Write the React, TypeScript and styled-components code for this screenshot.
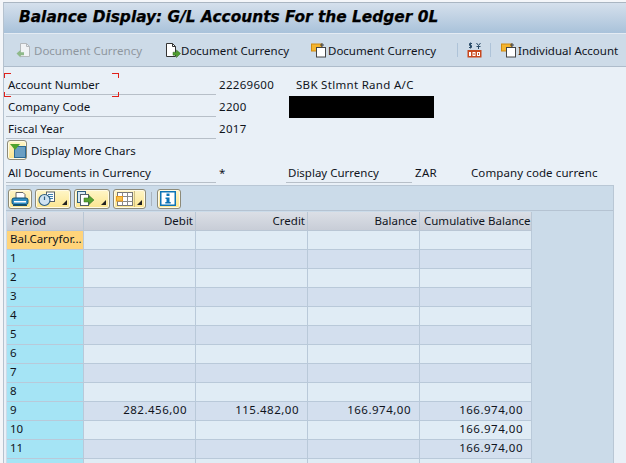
import React from 'react';
import styled, { createGlobalStyle } from 'styled-components';

const GlobalStyle = createGlobalStyle`
  html, body { margin: 0; padding: 0; background: #f4f6f9; }
  body { font-family: "Noto Sans", "Open Sans", "Liberation Sans", sans-serif; font-size: 11.5px; color: #10141c; }
`;

const Page = styled.div`
  width: 623px;
  height: 461px;
  margin: 2px 0 0 3px;
  overflow: hidden;
  background: #e9f0f7;
  border-top: 1px solid #aab6c2;
  border-left: 1px solid #b5c2cf;
`;

const TitleBar = styled.div`
  height: 27px;
  padding: 0 0 3px 15px;
  display: flex;
  align-items: center;
  background: linear-gradient(#d5e0ec, #a9c2da);
  border-bottom: 1px solid #e4ebf3;
`;

const Title = styled.h1`
  margin: 0;
  font-family: "DejaVu Sans", Verdana, sans-serif;
  font-size: 15.4px;
  font-weight: 700;
  font-style: italic;
  color: #000;
  -webkit-text-stroke: 0.25px #000;
`;

const Toolbar = styled.div`
  height: 32px;
  display: flex;
  align-items: center;
  background: #cddbe8;
  border-bottom: 1px solid #aebccb;
`;

const ToolButton = styled.div<{ $disabled?: boolean; $width: number; $gap?: number; $pad?: number }>`
  width: ${p => p.$width}px;
  flex: none;
  display: flex;
  align-items: center;
  gap: ${p => p.$gap ?? 1}px;
  white-space: nowrap;
  color: ${p => (p.$disabled ? '#8f979f' : '#10141c')};
  padding-left: ${p => p.$pad ?? 12}px;
  box-sizing: border-box;
`;

const ToolSeparator = styled.div`
  width: 1px;
  height: 14px;
  flex: none;
  background: #aec3d8;
`;

const Form = styled.div`
  position: relative;
  padding: 6px 0 0 2px;
`;

const FormRow = styled.div`
  display: flex;
  align-items: flex-start;
  height: 22px;
`;

const Label = styled.div<{ $width?: number }>`
  width: ${p => p.$width ?? 210}px;
  flex: none;
  box-sizing: border-box;
  height: 22px;
  line-height: 16px;
  padding: 4px 0 0 2px;
  border-bottom: 1px solid #b7bfc8;
  white-space: nowrap;
`;

const Value = styled.div<{ $width?: number; $spacing?: number }>`
  width: ${p => p.$width ?? 77}px;
  flex: none;
  padding: 4px 0 0 3px;
  line-height: 16px;
  letter-spacing: ${p => p.$spacing ?? 0.3}px;
  box-sizing: border-box;
  white-space: nowrap;
`;

const Redacted = styled.div`
  width: 145px;
  height: 22px;
  margin-top: 1px;
  background: #000;
`;

const FocusCorner = styled.span<{ $bottom?: boolean; $right?: boolean }>`
  position: absolute;
  width: 6px;
  height: 4px;
  ${p => (p.$right ? 'left: 108px;' : 'left: 0;')}
  ${p => (p.$bottom ? 'top: 25px;' : 'top: 6px;')}
  border: 0 solid #e0201a;
  ${p => (p.$bottom ? 'border-bottom-width: 1px;' : 'border-top-width: 1px;')}
  ${p => (p.$right ? 'border-right-width: 1px;' : 'border-left-width: 1px;')}
`;

const MoreRow = styled.div`
  display: flex;
  align-items: center;
  gap: 4px;
  height: 22px;
  padding-left: 1px;
`;

const IconButton = styled.div<{ $width?: number }>`
  width: ${p => p.$width ?? 24}px;
  height: 20px;
  flex: none;
  box-sizing: border-box;
  position: relative;
  display: flex;
  align-items: center;
  padding-left: 2px;
  border: 1px solid #8d8a78;
  border-radius: 3px;
  background: linear-gradient(#fff6c8, #fbe58f);
  box-shadow: inset 0 0 0 1px #fffbe6;
`;

const MenuCorner = styled.span`
  position: absolute;
  right: 3px;
  bottom: 3px;
  width: 0;
  height: 0;
  border-left: 5px solid transparent;
  border-bottom: 5px solid #222;
`;

const ButtonDivider = styled.span`
  position: absolute;
  right: 10px;
  top: 1px;
  bottom: 1px;
  width: 1px;
  background: #cdbf86;
`;

const GridPanel = styled.div`
  margin-top: 2px;
  width: 608px;
  height: 300px;
  box-sizing: border-box;
  background: #cbdbe9;
  border: 1px solid #b9c7d5;
  border-left: none;
`;

const GridToolbar = styled.div`
  height: 25px;
  box-sizing: border-box;
  padding: 1px 0 0 2px;
  display: flex;
  align-items: center;
  gap: 3px;
  border-bottom: 1px solid #b5c3d2;
`;

const GridDivider = styled.div`
  width: 1px;
  height: 14px;
  margin: 0 2px;
  background: #aab4bf;
`;

const Table = styled.div`
  margin: 1px 0 0 1px;
  width: 525px;
`;

const GridRow = styled.div`
  display: grid;
  grid-template-columns: 77px 112px 112px 112px 112px;
  height: 19px;
`;

const HeaderCell = styled.div<{ $right?: boolean }>`
  box-sizing: border-box;
  height: 19px;
  line-height: 18px;
  padding: 0 ${p => (p.$right ? '2px' : '3px')} 0 ${p => (p.$right ? '3px' : '4px')};
  text-align: ${p => (p.$right ? 'right' : 'left')};
  background: linear-gradient(#dbdfe6, #c8cdd7);
  border-right: 1px solid #b9c6d4;
  border-bottom: 1px solid #b9c6d4;
  white-space: nowrap;
`;

const PeriodCell = styled.div<{ $total?: boolean }>`
  box-sizing: border-box;
  line-height: 16px;
  padding-left: 3px;
  background: ${p => (p.$total ? '#ffd47a' : '#a5e4f5')};
  border-right: 1px solid #b9c9d9;
  border-bottom: 1px solid #b9c9d9;
  white-space: nowrap;
  overflow: hidden;
`;

const AmountCell = styled.div<{ $odd: boolean }>`
  box-sizing: border-box;
  line-height: 16px;
  padding-right: 8px;
  letter-spacing: 0.5px;
  text-align: right;
  background: ${p => (p.$odd ? '#e0ecf5' : '#d3dfee')};
  border-right: 1px solid #b9c9d9;
  border-bottom: 1px solid #b9c9d9;
`;

const Svg = styled.svg`
  flex: none;
  display: block;
`;

const FadedDocIcon = () => (
  <Svg width="16" height="16" viewBox="0 0 16 16">
    <path d="M4.500 1.500h6l3 3v10h-9z" fill="#f1f3f5" stroke="#b4b8bc" />
    <path d="M10.500 1.500v3h3" fill="none" stroke="#b4b8bc" />
    <path d="M0.500 11.500l4-3.500v2.200H8v3H4.500V15.500z" fill="#8fb98a" />
  </Svg>
);

const DocIcon = () => (
  <Svg width="16" height="16" viewBox="0 0 16 16">
    <path d="M1.500 1.500h6l3 3v10h-9z" fill="#fff" stroke="#333" />
    <path d="M7.500 1.500v3h3" fill="none" stroke="#333" />
    <path d="M15.500 11.500l-4-3.500v2.200H8v3h3.500V15.500z" fill="#4f9d2f" stroke="#2c6b1a" strokeWidth=".5" />
  </Svg>
);

const CopyIcon = () => (
  <Svg width="16" height="16" viewBox="0 0 16 16">
    <rect x="0.500" y="2" width="10" height="7" fill="#f5b52e" stroke="#d08a10" />
    <rect x="5.500" y="5.500" width="9" height="9.500" fill="#fff" stroke="#444" />
    <path d="M11 1v4M9 3h4" stroke="#444" strokeWidth="1" />
  </Svg>
);

const CurrencyIcon = () => (
  <Svg width="15" height="16" viewBox="0 0 15 16">
    <rect x="0.500" y="8" width="14" height="7.500" fill="#c8481e" />
    <rect x="2" y="10" width="2" height="4" fill="#fff" />
    <rect x="5.500" y="10" width="3" height="4" fill="#fff" />
    <rect x="6.500" y="11" width="1" height="2" fill="#c8481e" />
    <rect x="10" y="10" width="3" height="4" fill="#fff" />
    <rect x="11" y="11" width="1" height="2" fill="#c8481e" />
    <path d="M5 1.500H2.500v2h2v2H2M3.500 .5v6M9.500 1l2 2.500 2-2.500M11.500 3.500v3.500M9.500 4.500h4" fill="none" stroke="#2a4a66" />
  </Svg>
);

const FilterIcon = () => (
  <Svg width="16" height="15" viewBox="0 0 16 15">
    <rect x="4.500" y="3.500" width="11" height="11" fill="#6a9fc4" stroke="#2b6a96" />
    <path d="M0 1h10L5 7z" fill="#4fa32d" />
  </Svg>
);

const PrintIcon = () => (
  <Svg width="18" height="16" viewBox="0 0 18 16">
    <path d="M5 1.500h7l2 2v4H5z" fill="#fff" stroke="#666" />
    <rect x="1" y="7" width="16" height="6.500" rx="2" fill="#2f8fc4" stroke="#14506f" />
    <rect x="3" y="10" width="12" height="1.500" fill="#fff" />
    <rect x="2" y="14" width="14" height="1" fill="#14506f" />
  </Svg>
);

const ViewIcon = () => (
  <Svg width="18" height="16" viewBox="0 0 18 16">
    <rect x="8.500" y="1" width="8" height="9.500" fill="#fff" stroke="#55606a" />
    <path d="M10 3.500h5M10 5.500h5M10 7.500h5" stroke="#3e7fb0" />
    <circle cx="6.500" cy="9" r="5.500" fill="#cfe3f2" stroke="#2e5f82" strokeWidth="1.200" />
    <path d="M6.500 5.500V9" stroke="#2e5f82" strokeWidth="1.200" />
  </Svg>
);

const ExportIcon = () => (
  <Svg width="18" height="16" viewBox="0 0 18 16">
    <rect x="0.500" y="0.500" width="8" height="11" fill="#d7e8f4" stroke="#2e5f82" />
    <rect x="3.500" y="3.500" width="8" height="11" fill="#fff" stroke="#55606a" />
    <path d="M17 9l-5-4.500V7H7v4h5v2.500z" fill="#58a332" stroke="#2c6b1a" strokeWidth=".5" />
  </Svg>
);

const LayoutIcon = () => (
  <Svg width="18" height="16" viewBox="0 0 18 16">
    <rect x="1.500" y="1.500" width="15" height="13" fill="#fff" stroke="#777" />
    <path d="M6.500 1.500v13M11.500 1.500v13M1.500 5.500h15M1.500 10.500h15" stroke="#8a8a8a" />
    <rect x="0.500" y="5.500" width="6" height="4.500" fill="#f6c24a" stroke="#e89a20" />
  </Svg>
);

const InfoIcon = () => (
  <Svg width="16" height="15" viewBox="0 0 16 15">
    <rect x="0.750" y="0.750" width="14.500" height="13.500" fill="#fff" stroke="#0d74b5" strokeWidth="1.500" />
    <rect x="6.500" y="2.500" width="3" height="2.500" fill="#0d74b5" />
    <path d="M5.500 6.500h4v4.500h1.200v1.500H5.300V11h1.200V8H5.500z" fill="#0d74b5" />
  </Svg>
);

const rows: [string, string, string, string, string][] = [
  ['Bal.Carryfor...', '', '', '', ''],
  ['1', '', '', '', ''],
  ['2', '', '', '', ''],
  ['3', '', '', '', ''],
  ['4', '', '', '', ''],
  ['5', '', '', '', ''],
  ['6', '', '', '', ''],
  ['7', '', '', '', ''],
  ['8', '', '', '', ''],
  ['9', '282.456,00', '115.482,00', '166.974,00', '166.974,00'],
  ['10', '', '', '', '166.974,00'],
  ['11', '', '', '', '166.974,00'],
  ['12', '', '', '', '166.974,00'],
];

export default function App() {
  return (
    <Page>
      <GlobalStyle />
      <TitleBar>
        <Title>Balance Display: G/L Accounts For the Ledger 0L</Title>
      </TitleBar>
      <Toolbar>
        <ToolButton $disabled $width={149} $gap={2}><FadedDocIcon />Document Currency</ToolButton>
        <ToolButton $width={146} $gap={0}><DocIcon />Document Currency</ToolButton>
        <ToolButton $width={158}><CopyIcon />Document Currency</ToolButton>
        <ToolSeparator />
        <ToolButton $width={32} $pad={9}><CurrencyIcon /></ToolButton>
        <ToolSeparator />
        <ToolButton $width={130} $pad={10}><CopyIcon />Individual Account</ToolButton>
      </Toolbar>
      <Form>
        <FocusCorner />
        <FocusCorner $right />
        <FocusCorner $bottom />
        <FocusCorner $bottom $right />
        <FormRow>
          <Label>Account Number</Label>
          <Value>22269600</Value>
          <Value>SBK Stlmnt Rand A/C</Value>
        </FormRow>
        <FormRow>
          <Label>Company Code</Label>
          <Value $width={73}>2200</Value>
          <Redacted />
        </FormRow>
        <FormRow>
          <Label>Fiscal Year</Label>
          <Value>2017</Value>
        </FormRow>
        <MoreRow>
          <IconButton $width={20}><FilterIcon /></IconButton>
          Display More Chars
        </MoreRow>
        <FormRow>
          <Label>All Documents in Currency</Label>
          <Value $width={70}>*</Value>
          <Label $width={126}>Display Currency</Label>
          <Value $width={56}>ZAR</Value>
          <Value $width={130} $spacing={0.1}>Company code currenc</Value>
        </FormRow>
        <GridPanel>
          <GridToolbar>
            <IconButton><PrintIcon /></IconButton>
            <IconButton $width={36}><ViewIcon /><MenuCorner /></IconButton>
            <IconButton $width={36}><ExportIcon /><MenuCorner /></IconButton>
            <IconButton $width={33}><LayoutIcon /><ButtonDivider /><MenuCorner /></IconButton>
            <GridDivider />
            <IconButton><InfoIcon /></IconButton>
          </GridToolbar>
          <Table>
            <GridRow>
              <HeaderCell>Period</HeaderCell>
              <HeaderCell $right>Debit</HeaderCell>
              <HeaderCell $right>Credit</HeaderCell>
              <HeaderCell $right>Balance</HeaderCell>
              <HeaderCell>Cumulative Balance</HeaderCell>
            </GridRow>
            {rows.map((row, i) => (
              <GridRow key={row[0]}>
                <PeriodCell $total={i === 0}>{row[0]}</PeriodCell>
                {row.slice(1).map((amount, c) => (
                  <AmountCell key={c} $odd={i % 2 === 0}>{amount}</AmountCell>
                ))}
              </GridRow>
            ))}
          </Table>
        </GridPanel>
      </Form>
    </Page>
  );
}
